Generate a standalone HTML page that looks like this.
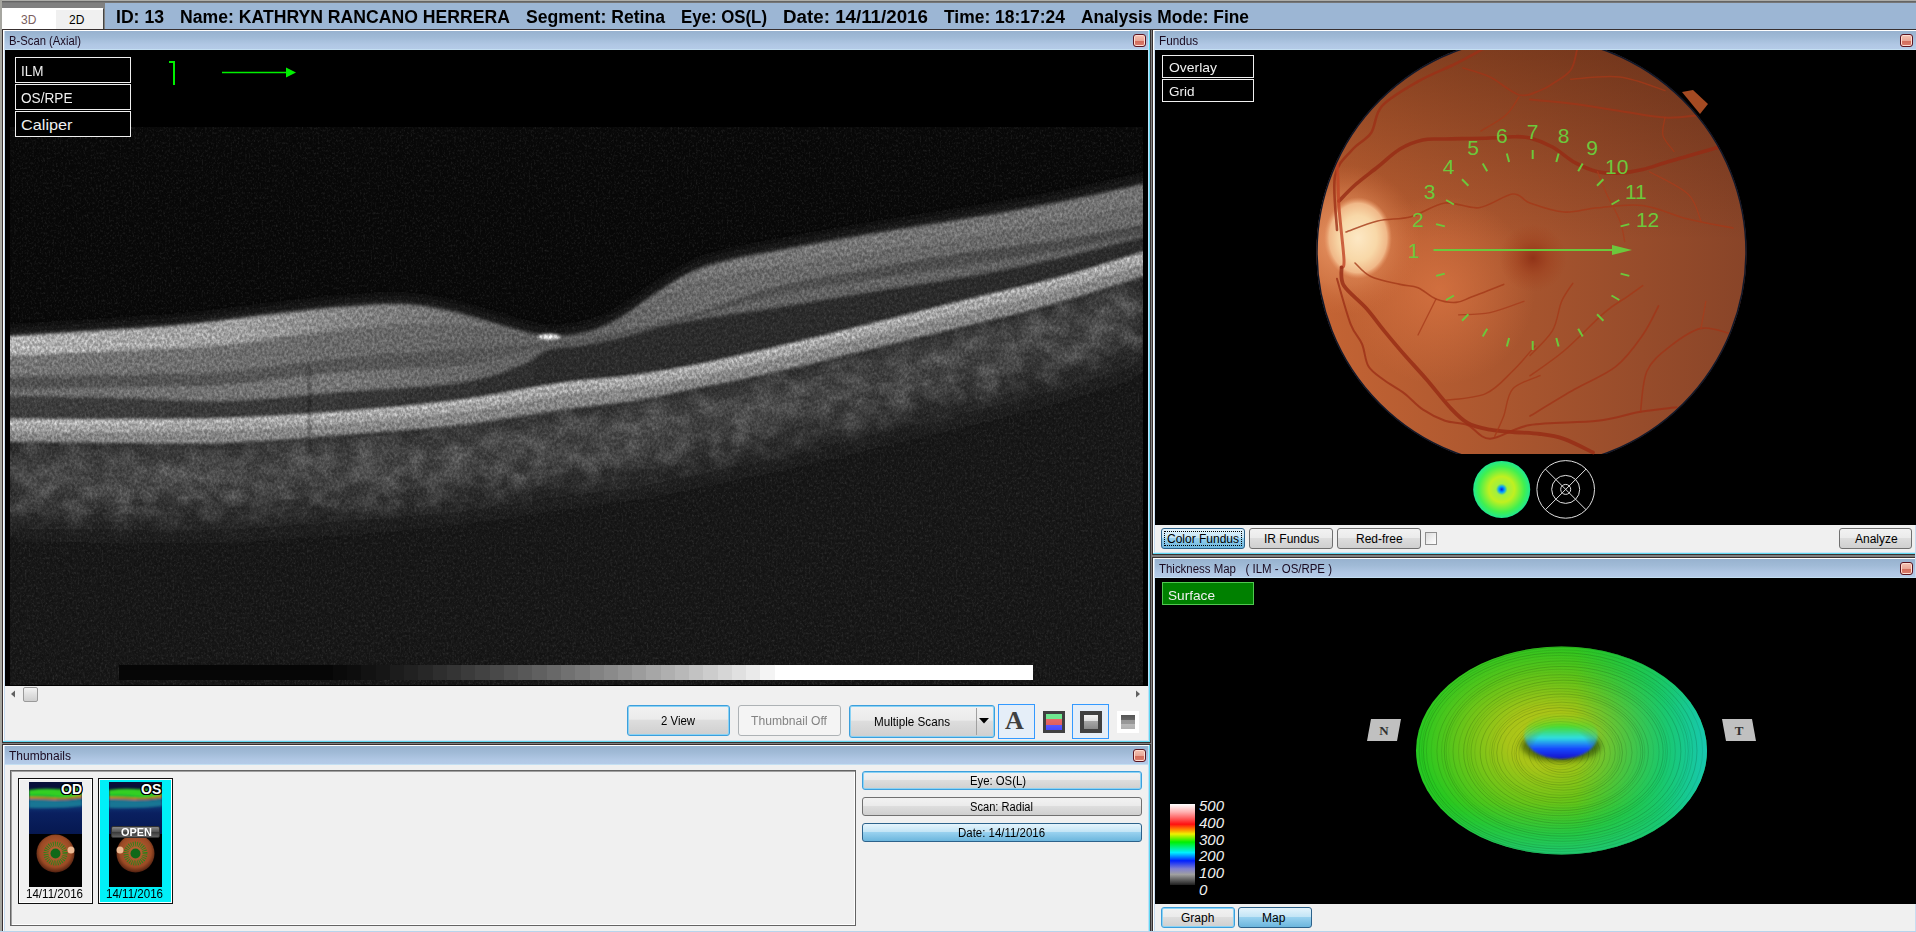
<!DOCTYPE html><html><head><meta charset="utf-8"><style>
*{box-sizing:border-box}
html,body{margin:0;padding:0;width:1916px;height:932px;overflow:hidden;background:#808080;font-family:"Liberation Sans",sans-serif}
.a{position:absolute}
.t{position:absolute;white-space:pre;transform-origin:0 0;line-height:1}
.tb{position:absolute;background:linear-gradient(#97b2cf,#a0bad6 35%,#b0c7e4 75%,#b5cbe8)}
.close{position:absolute;width:13px;height:13px;border:1px solid #5a1420;border-radius:3px;background:linear-gradient(#f6c4b4,#eaa898 50%,#d26c5a 51%,#da7c6c);box-shadow:inset 0 0 0 1px #ffdcd0}
.btn{position:absolute;border:1px solid #707070;border-radius:3px;background:linear-gradient(#f2f2f2,#ebebeb 45%,#dddddd 50%,#cfcfcf)}
.hot{border-color:#3c9fdc;box-shadow:inset 0 0 0 1px #8ad2f4}
.sel{border-color:#2c628b;background:linear-gradient(#e5f4fc,#c4e5f6 45%,#98d1ef 50%,#6cb6dd)}
.dis{border-color:#adb2b5;background:#f4f4f4}
.ob{position:absolute;border:1.5px solid #f0f0f0;background:#000}
</style></head><body>
<div class="a" style="left:0px;top:0px;width:1916px;height:1px;background:#acaca8"></div>
<div class="a" style="left:2px;top:1px;width:1914px;height:1px;background:#646464"></div>
<div class="a" style="left:2px;top:2px;width:1914px;height:1px;background:#767676"></div>
<div class="a" style="left:0px;top:0px;width:2px;height:932px;background:#a6a6a0"></div>
<div class="a" style="left:2px;top:3px;width:103px;height:5px;background:#808080"></div>
<div class="a" style="left:2px;top:8px;width:101px;height:21px;background:#fff"></div>
<div class="a" style="left:56px;top:10px;width:47px;height:19px;background:#f0f0f0"></div>
<div class="a" style="left:103px;top:9px;width:1px;height:20px;background:#444"></div>
<div class="t" style="left:21px;top:14px;font-size:12px;color:#7a6060">3D</div>
<div class="t" style="left:69px;top:14px;font-size:12px;color:#000">2D</div>
<div class="a" style="left:105px;top:3px;width:1811px;height:26px;background:#9cb6d4"></div>
<div class="a" style="left:2px;top:29px;width:1914px;height:1px;background:#333"></div>
<div class="a" style="left:2px;top:29px;width:1149px;height:714px;background:#f0f0f0"></div>
<div class="a" style="left:2px;top:29px;width:1149px;height:1px;background:#383030"></div>
<div class="a" style="left:2px;top:29px;width:1px;height:714px;background:#383030"></div>
<div class="a" style="left:3px;top:30px;width:1148px;height:1px;background:#fff"></div>
<div class="a" style="left:3px;top:30px;width:1px;height:713px;background:#fff"></div>
<div class="a" style="left:4px;top:31px;width:1px;height:712px;background:#c8dcf0"></div>
<div class="a" style="left:1150px;top:29px;width:1px;height:714px;background:#383030"></div>
<div class="a" style="left:1149px;top:30px;width:1px;height:713px;background:#60d8f0"></div>
<div class="a" style="left:1148px;top:31px;width:1px;height:711px;background:#c0e0f8"></div>
<div class="a" style="left:2px;top:742px;width:1149px;height:1px;background:#383030"></div>
<div class="a" style="left:3px;top:741px;width:1147px;height:1px;background:#60d8f0"></div>
<div class="a" style="left:4px;top:740px;width:1145px;height:1px;background:#d0e4f4"></div>
<div class="tb" style="left:5px;top:31px;width:1143px;height:18px"></div>
<div class="a" style="left:5px;top:49px;width:1143px;height:1px;background:#c4dff2"></div>
<div class="a" style="left:2px;top:744px;width:1149px;height:197px;background:#f0f0f0"></div>
<div class="a" style="left:2px;top:744px;width:1149px;height:1px;background:#383030"></div>
<div class="a" style="left:2px;top:744px;width:1px;height:197px;background:#383030"></div>
<div class="a" style="left:3px;top:745px;width:1148px;height:1px;background:#fff"></div>
<div class="a" style="left:3px;top:745px;width:1px;height:196px;background:#fff"></div>
<div class="a" style="left:4px;top:746px;width:1px;height:195px;background:#c8dcf0"></div>
<div class="a" style="left:1150px;top:744px;width:1px;height:197px;background:#383030"></div>
<div class="a" style="left:1149px;top:745px;width:1px;height:196px;background:#60d8f0"></div>
<div class="a" style="left:1148px;top:746px;width:1px;height:194px;background:#c0e0f8"></div>
<div class="tb" style="left:5px;top:746px;width:1143px;height:18px"></div>
<div class="a" style="left:5px;top:764px;width:1143px;height:1px;background:#c4dff2"></div>
<div class="a" style="left:1152px;top:29px;width:769px;height:526px;background:#f0f0f0"></div>
<div class="a" style="left:1152px;top:29px;width:769px;height:1px;background:#383030"></div>
<div class="a" style="left:1152px;top:29px;width:1px;height:526px;background:#383030"></div>
<div class="a" style="left:1153px;top:30px;width:768px;height:1px;background:#fff"></div>
<div class="a" style="left:1153px;top:30px;width:1px;height:525px;background:#fff"></div>
<div class="a" style="left:1154px;top:31px;width:1px;height:524px;background:#c8dcf0"></div>
<div class="a" style="left:1920px;top:29px;width:1px;height:526px;background:#383030"></div>
<div class="a" style="left:1919px;top:30px;width:1px;height:525px;background:#60d8f0"></div>
<div class="a" style="left:1918px;top:31px;width:1px;height:523px;background:#c0e0f8"></div>
<div class="a" style="left:1152px;top:554px;width:769px;height:1px;background:#383030"></div>
<div class="a" style="left:1153px;top:553px;width:767px;height:1px;background:#60d8f0"></div>
<div class="a" style="left:1154px;top:552px;width:765px;height:1px;background:#d0e4f4"></div>
<div class="tb" style="left:1155px;top:31px;width:761px;height:18px"></div>
<div class="a" style="left:1155px;top:49px;width:761px;height:1px;background:#c4dff2"></div>
<div class="a" style="left:1152px;top:557px;width:769px;height:384px;background:#f0f0f0"></div>
<div class="a" style="left:1152px;top:557px;width:769px;height:1px;background:#383030"></div>
<div class="a" style="left:1152px;top:557px;width:1px;height:384px;background:#383030"></div>
<div class="a" style="left:1153px;top:558px;width:768px;height:1px;background:#fff"></div>
<div class="a" style="left:1153px;top:558px;width:1px;height:383px;background:#fff"></div>
<div class="a" style="left:1154px;top:559px;width:1px;height:382px;background:#c8dcf0"></div>
<div class="a" style="left:1920px;top:557px;width:1px;height:384px;background:#383030"></div>
<div class="a" style="left:1919px;top:558px;width:1px;height:383px;background:#60d8f0"></div>
<div class="a" style="left:1918px;top:559px;width:1px;height:381px;background:#c0e0f8"></div>
<div class="tb" style="left:1155px;top:559px;width:761px;height:18px"></div>
<div class="a" style="left:1155px;top:577px;width:761px;height:1px;background:#c4dff2"></div>
<div class="a" style="left:1915px;top:50px;width:1px;height:881px;background:#c8dcf0"></div>
<div class="a" style="left:0px;top:931px;width:1916px;height:1px;background:#b8d4ec"></div>
<div class="t" id="f0" style="left:9px;top:35px;font-size:12px;color:#1a0a20;transform:scaleX(0.9389)">B-Scan (Axial)</div>
<div class="t" id="f1" style="left:1159px;top:35px;font-size:12px;color:#1a0a20;transform:scaleX(0.9742)">Fundus</div>
<div class="t" id="f2" style="left:9px;top:750px;font-size:12px;color:#1a0a20;transform:scaleX(0.9995)">Thumbnails</div>
<div class="t" id="f3" style="left:1159px;top:563px;font-size:12px;color:#1a0a20;transform:scaleX(0.9538)">Thickness Map   ( ILM - OS/RPE )</div>
<div class="close" style="left:1133px;top:34px"></div>
<div class="close" style="left:1900px;top:34px"></div>
<div class="close" style="left:1133px;top:749px"></div>
<div class="close" style="left:1900px;top:562px"></div>
<div class="a" style="left:5px;top:50px;width:1143px;height:636px;background:#000"></div>
<div class="a" style="left:1155px;top:50px;width:1760px;height:475px;background:#000"></div>
<div class="a" style="left:1155px;top:578px;width:1760px;height:326px;background:#000"></div>
<div class="t" id="f4" style="left:116px;top:8px;font-size:18px;font-weight:bold;color:#000;transform:scaleX(0.9790)">ID: 13</div>
<div class="t" id="f5" style="left:180px;top:8px;font-size:18px;font-weight:bold;color:#000;transform:scaleX(0.9791)">Name: KATHRYN RANCANO HERRERA</div>
<div class="t" id="f6" style="left:526px;top:8px;font-size:18px;font-weight:bold;color:#000;transform:scaleX(0.9787)">Segment: Retina</div>
<div class="t" id="f7" style="left:681px;top:8px;font-size:18px;font-weight:bold;color:#000;transform:scaleX(0.9346)">Eye: OS(L)</div>
<div class="t" id="f8" style="left:783px;top:8px;font-size:18px;font-weight:bold;color:#000;transform:scaleX(1.0423)">Date: 14/11/2016</div>
<div class="t" id="f9" style="left:944px;top:8px;font-size:18px;font-weight:bold;color:#000;transform:scaleX(0.9701)">Time: 18:17:24</div>
<div class="t" id="f10" style="left:1081px;top:8px;font-size:18px;font-weight:bold;color:#000;transform:scaleX(0.9653)">Analysis Mode: Fine</div>
<svg class="a" style="left:10px;top:127px" width="1133" height="558" viewBox="10 127 1133 558"><defs><filter id="ob" x="-5%" y="-5%" width="110%" height="110%"><feGaussianBlur stdDeviation="1.6"/></filter><filter id="ob3" x="-5%" y="-50%" width="110%" height="200%"><feGaussianBlur stdDeviation="4"/></filter><filter id="vn" x="0" y="0" width="100%" height="100%" color-interpolation-filters="sRGB"><feTurbulence type="fractalNoise" baseFrequency="0.55 0.4" numOctaves="2" seed="11" result="n"/><feColorMatrix in="n" type="matrix" values="0 0 0 0 1  0 0 0 0 1  0 0 0 0 1  2.5 0 0 0 -1.2"/></filter><filter id="ob2" x="-10%" y="-30%" width="120%" height="160%"><feGaussianBlur stdDeviation="16"/></filter><filter id="spk" x="0" y="0" width="100%" height="100%" color-interpolation-filters="sRGB"><feTurbulence type="fractalNoise" baseFrequency="0.4 0.3" numOctaves="2" seed="7" result="n"/><feColorMatrix in="n" type="matrix" values="0 0 0 0 0  0 0 0 0 0  0 0 0 0 0  1.4 0 0 0 -0.45" result="na"/><feComposite in="SourceGraphic" in2="na" operator="in" result="sp"/><feComposite in="sp" in2="SourceGraphic" operator="arithmetic" k1="0" k2="0.62" k3="0.83" k4="0"/></filter><filter id="mot" x="-5%" y="-40%" width="110%" height="180%" color-interpolation-filters="sRGB"><feTurbulence type="fractalNoise" baseFrequency="0.045 0.06" numOctaves="2" seed="3" result="n"/><feColorMatrix in="n" type="matrix" values="0 0 0 0 0  0 0 0 0 0  0 0 0 0 0  2.2 0 0 0 -0.75" result="na"/><feGaussianBlur in="SourceGraphic" stdDeviation="12" result="bl"/><feComposite in="bl" in2="na" operator="in"/></filter><linearGradient id="rnfl" gradientUnits="userSpaceOnUse" x1="10" y1="0" x2="1143" y2="0"><stop offset="0" stop-color="#b4b4b4"/><stop offset="0.2" stop-color="#a0a0a0"/><stop offset="0.3" stop-color="#848484"/><stop offset="0.38" stop-color="#727272"/><stop offset="0.5" stop-color="#5e5e5e"/><stop offset="0.62" stop-color="#747474"/><stop offset="1" stop-color="#727272"/></linearGradient><linearGradient id="gcl" gradientUnits="userSpaceOnUse" x1="10" y1="0" x2="1143" y2="0"><stop offset="0" stop-color="#747474"/><stop offset="0.3" stop-color="#6a6a6a"/><stop offset="0.45" stop-color="#626262"/><stop offset="0.62" stop-color="#6a6a6a"/><stop offset="1" stop-color="#686868"/></linearGradient><linearGradient id="inl" gradientUnits="userSpaceOnUse" x1="10" y1="0" x2="1143" y2="0"><stop offset="0" stop-color="#505050"/><stop offset="0.45" stop-color="#585858"/><stop offset="0.65" stop-color="#505050"/><stop offset="1" stop-color="#4a4a4a"/></linearGradient><linearGradient id="opl" gradientUnits="userSpaceOnUse" x1="10" y1="0" x2="1143" y2="0"><stop offset="0" stop-color="#6c6c6c"/><stop offset="0.3" stop-color="#747474"/><stop offset="0.45" stop-color="#606060"/><stop offset="0.7" stop-color="#626262"/><stop offset="1" stop-color="#606060"/></linearGradient><linearGradient id="onl" gradientUnits="userSpaceOnUse" x1="10" y1="0" x2="1143" y2="0"><stop offset="0" stop-color="#3c3c3c"/><stop offset="0.3" stop-color="#363636"/><stop offset="0.5" stop-color="#2a2a2a"/><stop offset="1" stop-color="#2c2c2c"/></linearGradient></defs><g filter="url(#spk)"><rect x="10" y="127" width="1133" height="558" fill="#080808"/><g filter="url(#ob2)"><path d="M0,436.90909090909093 C1.7,436.9 -10.0,436.8 10.0,437.0 C30.0,437.2 84.2,437.8 120.0,438.0 C155.8,438.2 188.3,439.3 225.0,438.0 C261.7,436.7 301.2,433.0 340.0,430.0 C378.8,427.0 421.3,424.2 458.0,420.0 C494.7,415.8 531.2,409.0 560.0,405.0 C588.8,401.0 607.3,399.8 631.0,396.0 C654.7,392.2 677.2,387.0 702.0,382.0 C726.8,377.0 752.0,372.3 780.0,366.0 C808.0,359.7 838.3,351.7 870.0,344.0 C901.7,336.3 938.3,327.8 970.0,320.0 C1001.7,312.2 1031.2,305.2 1060.0,297.0 C1088.8,288.8 1127.5,275.9 1143.0,271.0 C1158.5,266.1 1151.3,268.4 1153.0,267.9 L1170,720 C971.7,720.0 178.3,720.0 -20.0,720.0 Z" fill="#121212" /><path d="M0,436.90909090909093 C1.7,436.9 -10.0,436.8 10.0,437.0 C30.0,437.2 84.2,437.8 120.0,438.0 C155.8,438.2 188.3,439.3 225.0,438.0 C261.7,436.7 301.2,433.0 340.0,430.0 C378.8,427.0 421.3,424.2 458.0,420.0 C494.7,415.8 531.2,409.0 560.0,405.0 C588.8,401.0 607.3,399.8 631.0,396.0 C654.7,392.2 677.2,387.0 702.0,382.0 C726.8,377.0 752.0,372.3 780.0,366.0 C808.0,359.7 838.3,351.7 870.0,344.0 C901.7,336.3 938.3,327.8 970.0,320.0 C1001.7,312.2 1031.2,305.2 1060.0,297.0 C1088.8,288.8 1127.5,275.9 1143.0,271.0 C1158.5,266.1 1151.3,268.4 1153.0,267.9 L1153,357.86746987951807 C1151.3,358.4 1158.5,356.1 1143.0,361.0 C1127.5,365.9 1088.8,378.8 1060.0,387.0 C1031.2,395.2 1001.7,402.2 970.0,410.0 C938.3,417.8 901.7,426.3 870.0,434.0 C838.3,441.7 808.0,449.7 780.0,456.0 C752.0,462.3 726.8,467.0 702.0,472.0 C677.2,477.0 654.7,482.2 631.0,486.0 C607.3,489.8 588.8,491.0 560.0,495.0 C531.2,499.0 494.7,505.8 458.0,510.0 C421.3,514.2 378.8,517.0 340.0,520.0 C301.2,523.0 261.7,526.7 225.0,528.0 C188.3,529.3 155.8,528.2 120.0,528.0 C84.2,527.8 30.0,527.2 10.0,527.0 C-10.0,526.8 1.7,526.9 0.0,526.9 Z" fill="#272727" /><path d="M0,436.90909090909093 C1.7,436.9 -10.0,436.8 10.0,437.0 C30.0,437.2 84.2,437.8 120.0,438.0 C155.8,438.2 188.3,439.3 225.0,438.0 C261.7,436.7 301.2,433.0 340.0,430.0 C378.8,427.0 421.3,424.2 458.0,420.0 C494.7,415.8 531.2,409.0 560.0,405.0 C588.8,401.0 607.3,399.8 631.0,396.0 C654.7,392.2 677.2,387.0 702.0,382.0 C726.8,377.0 752.0,372.3 780.0,366.0 C808.0,359.7 838.3,351.7 870.0,344.0 C901.7,336.3 938.3,327.8 970.0,320.0 C1001.7,312.2 1031.2,305.2 1060.0,297.0 C1088.8,288.8 1127.5,275.9 1143.0,271.0 C1158.5,266.1 1151.3,268.4 1153.0,267.9 L1153,327.86746987951807 C1151.3,328.4 1158.5,326.1 1143.0,331.0 C1127.5,335.9 1088.8,348.8 1060.0,357.0 C1031.2,365.2 1001.7,372.2 970.0,380.0 C938.3,387.8 901.7,396.3 870.0,404.0 C838.3,411.7 808.0,419.7 780.0,426.0 C752.0,432.3 726.8,437.0 702.0,442.0 C677.2,447.0 654.7,452.2 631.0,456.0 C607.3,459.8 588.8,461.0 560.0,465.0 C531.2,469.0 494.7,475.8 458.0,480.0 C421.3,484.2 378.8,487.0 340.0,490.0 C301.2,493.0 261.7,496.7 225.0,498.0 C188.3,499.3 155.8,498.2 120.0,498.0 C84.2,497.8 30.0,497.2 10.0,497.0 C-10.0,496.8 1.7,496.9 0.0,496.9 Z" fill="#3e3e3e" /></g><g filter="url(#mot)"><path d="M0,444.90909090909093 C1.7,444.9 -10.0,444.8 10.0,445.0 C30.0,445.2 84.2,445.8 120.0,446.0 C155.8,446.2 188.3,447.3 225.0,446.0 C261.7,444.7 301.2,441.0 340.0,438.0 C378.8,435.0 421.3,432.2 458.0,428.0 C494.7,423.8 531.2,417.0 560.0,413.0 C588.8,409.0 607.3,407.8 631.0,404.0 C654.7,400.2 677.2,395.0 702.0,390.0 C726.8,385.0 752.0,380.3 780.0,374.0 C808.0,367.7 838.3,359.7 870.0,352.0 C901.7,344.3 938.3,335.8 970.0,328.0 C1001.7,320.2 1031.2,313.2 1060.0,305.0 C1088.8,296.8 1127.5,283.9 1143.0,279.0 C1158.5,274.1 1151.3,276.4 1153.0,275.9 L1153,347.86746987951807 C1151.3,348.4 1158.5,346.1 1143.0,351.0 C1127.5,355.9 1088.8,368.8 1060.0,377.0 C1031.2,385.2 1001.7,392.2 970.0,400.0 C938.3,407.8 901.7,416.3 870.0,424.0 C838.3,431.7 808.0,439.7 780.0,446.0 C752.0,452.3 726.8,457.0 702.0,462.0 C677.2,467.0 654.7,472.2 631.0,476.0 C607.3,479.8 588.8,481.0 560.0,485.0 C531.2,489.0 494.7,495.8 458.0,500.0 C421.3,504.2 378.8,507.0 340.0,510.0 C301.2,513.0 261.7,516.7 225.0,518.0 C188.3,519.3 155.8,518.2 120.0,518.0 C84.2,517.8 30.0,517.2 10.0,517.0 C-10.0,516.8 1.7,516.9 0.0,516.9 Z" fill="#5a5a5a" /></g><g filter="url(#ob3)"><path d="M0,328.6111111111111 C1.7,328.5 -6.7,329.0 10.0,328.0 C26.7,327.0 71.7,324.3 100.0,322.5 C128.3,320.7 153.3,319.5 180.0,317.0 C206.7,314.5 233.3,310.5 260.0,307.5 C286.7,304.5 316.7,300.9 340.0,299.0 C363.3,297.1 382.3,295.5 400.0,296.0 C417.7,296.5 432.3,299.4 446.0,302.0 C459.7,304.6 470.2,308.2 482.0,311.5 C493.8,314.8 506.8,318.8 517.0,321.5 C527.2,324.2 535.5,326.4 543.0,327.5 C550.5,328.6 553.3,329.0 562.0,328.0 C570.7,327.0 584.7,325.0 595.0,321.5 C605.3,318.0 614.2,312.9 624.0,307.0 C633.8,301.1 643.0,293.1 654.0,286.0 C665.0,278.9 678.2,270.0 690.0,264.5 C701.8,259.0 710.0,256.8 725.0,253.0 C740.0,249.2 755.8,246.5 780.0,242.0 C804.2,237.5 838.3,231.3 870.0,226.0 C901.7,220.7 938.3,215.3 970.0,210.0 C1001.7,204.7 1031.2,199.7 1060.0,194.0 C1088.8,188.3 1127.5,179.4 1143.0,176.0 C1158.5,172.6 1151.3,174.2 1153.0,173.8 L1153,186.83132530120483 C1151.3,187.2 1158.5,185.6 1143.0,189.0 C1127.5,192.4 1088.8,201.3 1060.0,207.0 C1031.2,212.7 1001.7,217.7 970.0,223.0 C938.3,228.3 901.7,233.7 870.0,239.0 C838.3,244.3 804.2,250.5 780.0,255.0 C755.8,259.5 740.0,262.2 725.0,266.0 C710.0,269.8 701.8,272.0 690.0,277.5 C678.2,283.0 665.0,291.9 654.0,299.0 C643.0,306.1 633.8,314.1 624.0,320.0 C614.2,325.9 605.3,331.0 595.0,334.5 C584.7,338.0 570.7,340.0 562.0,341.0 C553.3,342.0 550.5,341.6 543.0,340.5 C535.5,339.4 527.2,337.2 517.0,334.5 C506.8,331.8 493.8,327.8 482.0,324.5 C470.2,321.2 459.7,317.6 446.0,315.0 C432.3,312.4 417.7,309.5 400.0,309.0 C382.3,308.5 363.3,310.1 340.0,312.0 C316.7,313.9 286.7,317.5 260.0,320.5 C233.3,323.5 206.7,327.5 180.0,330.0 C153.3,332.5 128.3,333.7 100.0,335.5 C71.7,337.3 26.7,340.0 10.0,341.0 C-6.7,342.0 1.7,341.5 0.0,341.6 Z" fill="#1e1e1e" /></g><g filter="url(#ob)"><path d="M0,336.6111111111111 C1.7,336.5 -6.7,337.0 10.0,336.0 C26.7,335.0 71.7,332.3 100.0,330.5 C128.3,328.7 153.3,327.5 180.0,325.0 C206.7,322.5 233.3,318.5 260.0,315.5 C286.7,312.5 316.7,308.9 340.0,307.0 C363.3,305.1 382.3,303.5 400.0,304.0 C417.7,304.5 432.3,307.4 446.0,310.0 C459.7,312.6 470.2,316.2 482.0,319.5 C493.8,322.8 506.8,326.8 517.0,329.5 C527.2,332.2 535.5,334.4 543.0,335.5 C550.5,336.6 553.3,337.0 562.0,336.0 C570.7,335.0 584.7,333.0 595.0,329.5 C605.3,326.0 614.2,320.9 624.0,315.0 C633.8,309.1 643.0,301.1 654.0,294.0 C665.0,286.9 678.2,278.0 690.0,272.5 C701.8,267.0 710.0,264.8 725.0,261.0 C740.0,257.2 755.8,254.5 780.0,250.0 C804.2,245.5 838.3,239.3 870.0,234.0 C901.7,228.7 938.3,223.3 970.0,218.0 C1001.7,212.7 1031.2,207.7 1060.0,202.0 C1088.8,196.3 1127.5,187.4 1143.0,184.0 C1158.5,180.6 1151.3,182.2 1153.0,181.8 L1153,202.95180722891567 C1151.3,203.3 1158.5,201.8 1143.0,205.0 C1127.5,208.2 1088.8,216.5 1060.0,222.0 C1031.2,227.5 1001.7,232.8 970.0,238.0 C938.3,243.2 901.7,248.2 870.0,253.0 C838.3,257.8 804.2,263.2 780.0,267.0 C755.8,270.8 740.0,272.8 725.0,276.0 C710.0,279.2 701.8,281.2 690.0,286.0 C678.2,290.8 665.0,298.7 654.0,305.0 C643.0,311.3 636.3,318.3 624.0,324.0 C611.7,329.7 592.7,336.3 580.0,339.0 C567.3,341.7 558.0,340.5 548.0,340.0 C538.0,339.5 531.0,337.8 520.0,336.0 C509.0,334.2 498.7,330.8 482.0,329.0 C465.3,327.2 443.7,324.8 420.0,325.0 C396.3,325.2 372.5,326.7 340.0,330.0 C307.5,333.3 261.7,341.5 225.0,345.0 C188.3,348.5 155.8,349.2 120.0,351.0 C84.2,352.8 30.0,355.1 10.0,356.0 C-10.0,356.9 1.7,356.4 0.0,356.5 Z" fill="url(#rnfl)" /><path d="M0,356.45454545454544 C1.7,356.4 -10.0,356.9 10.0,356.0 C30.0,355.1 84.2,352.8 120.0,351.0 C155.8,349.2 188.3,348.5 225.0,345.0 C261.7,341.5 307.5,333.3 340.0,330.0 C372.5,326.7 396.3,325.2 420.0,325.0 C443.7,324.8 465.3,327.2 482.0,329.0 C498.7,330.8 509.0,334.2 520.0,336.0 C531.0,337.8 538.0,339.5 548.0,340.0 C558.0,340.5 567.3,341.7 580.0,339.0 C592.7,336.3 611.7,329.7 624.0,324.0 C636.3,318.3 643.0,311.3 654.0,305.0 C665.0,298.7 678.2,290.8 690.0,286.0 C701.8,281.2 710.0,279.2 725.0,276.0 C740.0,272.8 755.8,270.8 780.0,267.0 C804.2,263.2 838.3,257.8 870.0,253.0 C901.7,248.2 938.3,243.2 970.0,238.0 C1001.7,232.8 1031.2,227.5 1060.0,222.0 C1088.8,216.5 1127.5,208.2 1143.0,205.0 C1158.5,201.8 1151.3,203.3 1153.0,203.0 L1153,223.19277108433735 C1151.3,223.5 1158.5,222.2 1143.0,225.0 C1127.5,227.8 1088.8,235.5 1060.0,240.0 C1031.2,244.5 1001.7,247.2 970.0,252.0 C938.3,256.8 901.7,263.3 870.0,269.0 C838.3,274.7 812.0,277.8 780.0,286.0 C748.0,294.2 704.0,311.0 678.0,318.5 C652.0,326.0 640.3,327.2 624.0,331.0 C607.7,334.8 592.7,339.0 580.0,341.0 C567.3,343.0 558.0,342.2 548.0,343.0 C538.0,343.8 535.0,344.8 520.0,346.0 C505.0,347.2 488.0,347.8 458.0,350.0 C428.0,352.2 378.8,355.2 340.0,359.0 C301.2,362.8 261.7,369.8 225.0,372.5 C188.3,375.2 155.8,374.2 120.0,375.0 C84.2,375.8 30.0,376.6 10.0,377.0 C-10.0,377.4 1.7,377.2 0.0,377.2 Z" fill="url(#gcl)" /><path d="M0,377.1818181818182 C1.7,377.2 -10.0,377.4 10.0,377.0 C30.0,376.6 84.2,375.8 120.0,375.0 C155.8,374.2 188.3,375.2 225.0,372.5 C261.7,369.8 301.2,362.8 340.0,359.0 C378.8,355.2 428.0,352.2 458.0,350.0 C488.0,347.8 505.0,347.2 520.0,346.0 C535.0,344.8 538.0,343.8 548.0,343.0 C558.0,342.2 567.3,343.0 580.0,341.0 C592.7,339.0 607.7,334.8 624.0,331.0 C640.3,327.2 652.0,326.0 678.0,318.5 C704.0,311.0 748.0,294.2 780.0,286.0 C812.0,277.8 838.3,274.7 870.0,269.0 C901.7,263.3 938.3,256.8 970.0,252.0 C1001.7,247.2 1031.2,244.5 1060.0,240.0 C1088.8,235.5 1127.5,227.8 1143.0,225.0 C1158.5,222.2 1151.3,223.5 1153.0,223.2 L1153,230.95180722891567 C1151.3,231.3 1158.5,229.8 1143.0,233.0 C1127.5,236.2 1088.8,244.8 1060.0,250.0 C1031.2,255.2 1001.7,259.2 970.0,264.0 C938.3,268.8 901.7,274.0 870.0,279.0 C838.3,284.0 812.0,287.0 780.0,294.0 C748.0,301.0 704.0,314.3 678.0,321.0 C652.0,327.7 640.3,330.3 624.0,334.0 C607.7,337.7 592.7,341.0 580.0,343.0 C567.3,345.0 558.0,344.5 548.0,346.0 C538.0,347.5 535.0,348.8 520.0,352.0 C505.0,355.2 488.0,361.7 458.0,365.0 C428.0,368.3 378.8,368.8 340.0,372.0 C301.2,375.2 261.7,381.5 225.0,384.0 C188.3,386.5 155.8,386.2 120.0,387.0 C84.2,387.8 30.0,388.6 10.0,389.0 C-10.0,389.4 1.7,389.2 0.0,389.2 Z" fill="url(#inl)" /><path d="M0,389.1818181818182 C1.7,389.2 -10.0,389.4 10.0,389.0 C30.0,388.6 84.2,387.8 120.0,387.0 C155.8,386.2 188.3,386.5 225.0,384.0 C261.7,381.5 301.2,375.2 340.0,372.0 C378.8,368.8 428.0,368.3 458.0,365.0 C488.0,361.7 505.0,355.2 520.0,352.0 C535.0,348.8 538.0,347.5 548.0,346.0 C558.0,344.5 567.3,345.0 580.0,343.0 C592.7,341.0 607.7,337.7 624.0,334.0 C640.3,330.3 652.0,327.7 678.0,321.0 C704.0,314.3 748.0,301.0 780.0,294.0 C812.0,287.0 838.3,284.0 870.0,279.0 C901.7,274.0 938.3,268.8 970.0,264.0 C1001.7,259.2 1031.2,255.2 1060.0,250.0 C1088.8,244.8 1127.5,236.2 1143.0,233.0 C1158.5,229.8 1151.3,231.3 1153.0,231.0 L1153,234.46987951807228 C1151.3,234.9 1158.5,233.1 1143.0,237.0 C1127.5,240.9 1088.8,251.5 1060.0,258.0 C1031.2,264.5 1001.7,270.3 970.0,276.0 C938.3,281.7 901.7,286.8 870.0,292.0 C838.3,297.2 812.0,301.8 780.0,307.0 C748.0,312.2 704.0,318.0 678.0,323.0 C652.0,328.0 640.3,333.2 624.0,337.0 C607.7,340.8 592.7,343.8 580.0,346.0 C567.3,348.2 558.0,346.7 548.0,350.0 C538.0,353.3 535.0,360.5 520.0,366.0 C505.0,371.5 488.0,378.7 458.0,383.0 C428.0,387.3 378.8,389.0 340.0,392.0 C301.2,395.0 261.7,400.0 225.0,401.0 C188.3,402.0 155.8,398.8 120.0,398.0 C84.2,397.2 30.0,396.4 10.0,396.0 C-10.0,395.6 1.7,395.8 0.0,395.8 Z" fill="url(#opl)" /><path d="M0,395.8181818181818 C1.7,395.8 -10.0,395.6 10.0,396.0 C30.0,396.4 84.2,397.2 120.0,398.0 C155.8,398.8 188.3,402.0 225.0,401.0 C261.7,400.0 301.2,395.0 340.0,392.0 C378.8,389.0 428.0,387.3 458.0,383.0 C488.0,378.7 505.0,371.5 520.0,366.0 C535.0,360.5 538.0,353.3 548.0,350.0 C558.0,346.7 567.3,348.2 580.0,346.0 C592.7,343.8 607.7,340.8 624.0,337.0 C640.3,333.2 652.0,328.0 678.0,323.0 C704.0,318.0 748.0,312.2 780.0,307.0 C812.0,301.8 838.3,297.2 870.0,292.0 C901.7,286.8 938.3,281.7 970.0,276.0 C1001.7,270.3 1031.2,264.5 1060.0,258.0 C1088.8,251.5 1127.5,240.9 1143.0,237.0 C1158.5,233.1 1151.3,234.9 1153.0,234.5 L1153,250.9879518072289 C1151.3,251.5 1158.5,249.3 1143.0,254.0 C1127.5,258.7 1088.8,271.2 1060.0,279.0 C1031.2,286.8 1001.7,293.2 970.0,301.0 C938.3,308.8 901.7,318.2 870.0,326.0 C838.3,333.8 808.0,341.4 780.0,348.0 C752.0,354.6 726.8,360.6 702.0,365.5 C677.2,370.4 654.7,374.2 631.0,377.5 C607.3,380.8 588.8,380.9 560.0,385.0 C531.2,389.1 494.7,397.2 458.0,402.0 C421.3,406.8 378.8,410.5 340.0,413.5 C301.2,416.5 261.7,418.8 225.0,420.0 C188.3,421.2 155.8,420.8 120.0,421.0 C84.2,421.2 30.0,421.0 10.0,421.0 C-10.0,421.0 1.7,421.0 0.0,421.0 Z" fill="url(#onl)" /><path d="M0,419.5 C1.7,419.5 -10.0,419.5 10.0,419.5 C30.0,419.5 84.2,419.7 120.0,419.5 C155.8,419.3 188.3,419.8 225.0,418.5 C261.7,417.2 301.2,415.0 340.0,412.0 C378.8,409.0 421.3,405.2 458.0,400.5 C494.7,395.8 531.2,387.6 560.0,383.5 C588.8,379.4 607.3,379.2 631.0,376.0 C654.7,372.8 677.2,368.9 702.0,364.0 C726.8,359.1 752.0,353.1 780.0,346.5 C808.0,339.9 838.3,332.3 870.0,324.5 C901.7,316.7 938.3,307.3 970.0,299.5 C1001.7,291.7 1031.2,285.3 1060.0,277.5 C1088.8,269.7 1127.5,257.2 1143.0,252.5 C1158.5,247.8 1151.3,250.0 1153.0,249.5 L1153,253.9879518072289 C1151.3,254.5 1158.5,252.3 1143.0,257.0 C1127.5,261.7 1088.8,274.2 1060.0,282.0 C1031.2,289.8 1001.7,296.2 970.0,304.0 C938.3,311.8 901.7,321.2 870.0,329.0 C838.3,336.8 808.0,344.4 780.0,351.0 C752.0,357.6 726.8,363.6 702.0,368.5 C677.2,373.4 654.7,377.2 631.0,380.5 C607.3,383.8 588.8,383.9 560.0,388.0 C531.2,392.1 494.7,400.2 458.0,405.0 C421.3,409.8 378.8,413.5 340.0,416.5 C301.2,419.5 261.7,421.8 225.0,423.0 C188.3,424.2 155.8,423.8 120.0,424.0 C84.2,424.2 30.0,424.0 10.0,424.0 C-10.0,424.0 1.7,424.0 0.0,424.0 Z" fill="#bcbcbc" /><path d="M0,424.0 C1.7,424.0 -10.0,424.0 10.0,424.0 C30.0,424.0 84.2,424.2 120.0,424.0 C155.8,423.8 188.3,424.2 225.0,423.0 C261.7,421.8 301.2,419.5 340.0,416.5 C378.8,413.5 421.3,409.8 458.0,405.0 C494.7,400.2 531.2,392.1 560.0,388.0 C588.8,383.9 607.3,383.8 631.0,380.5 C654.7,377.2 677.2,373.4 702.0,368.5 C726.8,363.6 752.0,357.6 780.0,351.0 C808.0,344.4 838.3,336.8 870.0,329.0 C901.7,321.2 938.3,311.8 970.0,304.0 C1001.7,296.2 1031.2,289.8 1060.0,282.0 C1088.8,274.2 1127.5,261.7 1143.0,257.0 C1158.5,252.3 1151.3,254.5 1153.0,254.0 L1153,261.9879518072289 C1151.3,262.5 1158.5,260.3 1143.0,265.0 C1127.5,269.7 1088.8,282.2 1060.0,290.0 C1031.2,297.8 1001.7,304.2 970.0,312.0 C938.3,319.8 901.7,329.2 870.0,337.0 C838.3,344.8 808.0,352.4 780.0,359.0 C752.0,365.6 726.8,371.6 702.0,376.5 C677.2,381.4 654.7,385.2 631.0,388.5 C607.3,391.8 588.8,391.9 560.0,396.0 C531.2,400.1 494.7,408.2 458.0,413.0 C421.3,417.8 378.8,421.5 340.0,424.5 C301.2,427.5 261.7,429.8 225.0,431.0 C188.3,432.2 155.8,431.8 120.0,432.0 C84.2,432.2 30.0,432.0 10.0,432.0 C-10.0,432.0 1.7,432.0 0.0,432.0 Z" fill="#a4a4a4" /><path d="M0,432.0 C1.7,432.0 -10.0,432.0 10.0,432.0 C30.0,432.0 84.2,432.2 120.0,432.0 C155.8,431.8 188.3,432.2 225.0,431.0 C261.7,429.8 301.2,427.5 340.0,424.5 C378.8,421.5 421.3,417.8 458.0,413.0 C494.7,408.2 531.2,400.1 560.0,396.0 C588.8,391.9 607.3,391.8 631.0,388.5 C654.7,385.2 677.2,381.4 702.0,376.5 C726.8,371.6 752.0,365.6 780.0,359.0 C808.0,352.4 838.3,344.8 870.0,337.0 C901.7,329.2 938.3,319.8 970.0,312.0 C1001.7,304.2 1031.2,297.8 1060.0,290.0 C1088.8,282.2 1127.5,269.7 1143.0,265.0 C1158.5,260.3 1151.3,262.5 1153.0,262.0 L1153,272.86746987951807 C1151.3,273.4 1158.5,271.1 1143.0,276.0 C1127.5,280.9 1088.8,293.8 1060.0,302.0 C1031.2,310.2 1001.7,317.2 970.0,325.0 C938.3,332.8 901.7,341.3 870.0,349.0 C838.3,356.7 808.0,364.7 780.0,371.0 C752.0,377.3 726.8,382.0 702.0,387.0 C677.2,392.0 654.7,397.2 631.0,401.0 C607.3,404.8 588.8,406.0 560.0,410.0 C531.2,414.0 494.7,420.8 458.0,425.0 C421.3,429.2 378.8,432.0 340.0,435.0 C301.2,438.0 261.7,441.7 225.0,443.0 C188.3,444.3 155.8,443.2 120.0,443.0 C84.2,442.8 30.0,442.2 10.0,442.0 C-10.0,441.8 1.7,441.9 0.0,441.9 Z" fill="#868686" /><ellipse cx="549" cy="336.5" rx="11" ry="2.5" fill="#f4f4f4"/><rect x="308" y="365" width="3" height="90" fill="#000" opacity="0.35"/></g></g><rect x="10" y="127" width="1133" height="558" fill="#fff" filter="url(#vn)" opacity="0.09"/></svg>
<div class="ob" style="left:15px;top:57px;width:116px;height:26px"></div>
<div class="t" id="f11" style="left:21px;top:63px;font-size:15px;color:#f0f0f0;transform:scaleX(0.8994)">ILM</div>
<div class="ob" style="left:15px;top:84px;width:116px;height:26px"></div>
<div class="t" id="f12" style="left:21px;top:90px;font-size:15px;color:#f0f0f0;transform:scaleX(0.9085)">OS/RPE</div>
<div class="ob" style="left:15px;top:111px;width:116px;height:26px"></div>
<div class="t" id="f13" style="left:21px;top:117px;font-size:15px;color:#f0f0f0;transform:scaleX(1.0835)">Caliper</div>
<svg class="a" style="left:160px;top:55px" width="150" height="40"><path d="M9,7 L14,7 L14,30" stroke="#00f000" stroke-width="2" fill="none"/><line x1="62" y1="17.5" x2="128" y2="17.5" stroke="#00f000" stroke-width="1.5"/><path d="M126,12.5 L136,17.5 L126,22.5 Z" fill="#00f000"/></svg>
<div class="a" style="left:119px;top:665px;width:914px;height:15px;background:linear-gradient(90deg,#060606 0px,#060606 214px,rgb(10,10,10) 214.0px,rgb(10,10,10) 228.2px,rgb(13,13,13) 228.2px,rgb(13,13,13) 242.5px,rgb(18,18,18) 242.5px,rgb(18,18,18) 256.8px,rgb(22,22,22) 256.8px,rgb(22,22,22) 271.0px,rgb(28,28,28) 271.0px,rgb(28,28,28) 285.2px,rgb(33,33,33) 285.2px,rgb(33,33,33) 299.5px,rgb(39,39,39) 299.5px,rgb(39,39,39) 313.8px,rgb(46,46,46) 313.8px,rgb(46,46,46) 328.0px,rgb(52,52,52) 328.0px,rgb(52,52,52) 342.2px,rgb(59,59,59) 342.2px,rgb(59,59,59) 356.5px,rgb(66,66,66) 356.5px,rgb(66,66,66) 370.8px,rgb(73,73,73) 370.8px,rgb(73,73,73) 385.0px,rgb(81,81,81) 385.0px,rgb(81,81,81) 399.2px,rgb(88,88,88) 399.2px,rgb(88,88,88) 413.5px,rgb(96,96,96) 413.5px,rgb(96,96,96) 427.8px,rgb(104,104,104) 427.8px,rgb(104,104,104) 442.0px,rgb(113,113,113) 442.0px,rgb(113,113,113) 456.2px,rgb(121,121,121) 456.2px,rgb(121,121,121) 470.5px,rgb(130,130,130) 470.5px,rgb(130,130,130) 484.8px,rgb(138,138,138) 484.8px,rgb(138,138,138) 499.0px,rgb(147,147,147) 499.0px,rgb(147,147,147) 513.2px,rgb(156,156,156) 513.2px,rgb(156,156,156) 527.5px,rgb(166,166,166) 527.5px,rgb(166,166,166) 541.8px,rgb(175,175,175) 541.8px,rgb(175,175,175) 556.0px,rgb(184,184,184) 556.0px,rgb(184,184,184) 570.2px,rgb(194,194,194) 570.2px,rgb(194,194,194) 584.5px,rgb(204,204,204) 584.5px,rgb(204,204,204) 598.8px,rgb(214,214,214) 598.8px,rgb(214,214,214) 613.0px,rgb(224,224,224) 613.0px,rgb(224,224,224) 627.2px,rgb(234,234,234) 627.2px,rgb(234,234,234) 641.5px,rgb(244,244,244) 641.5px,rgb(244,244,244) 655.8px,rgb(255,255,255) 655.8px,rgb(255,255,255) 670.0px,#fff 670px,#fff 914px)"></div>
<svg class="a" style="left:5px;top:686px" width="1143" height="16"><path d="M6,8 L10,4.5 L10,11.5 Z" fill="#606060"/><path d="M1131,4.5 L1135,8 L1131,11.5 Z" fill="#606060"/></svg>
<div class="a" style="left:23px;top:687px;width:15px;height:15px;border:1px solid #9a9a9a;border-radius:2px;background:linear-gradient(#f4f4f4,#e0e0e0 50%,#cfcfcf)"></div>
<div class="btn hot" style="left:627px;top:705px;width:103px;height:31px"></div>
<div class="t" id="f14" style="left:661px;top:715px;font-size:12px;color:#000;transform:scaleX(0.9494)">2 View</div>
<div class="btn dis" style="left:738px;top:705px;width:103px;height:31px"></div>
<div class="t" id="f15" style="left:751px;top:715px;font-size:12px;color:#838383;transform:scaleX(1.0112)">Thumbnail Off</div>
<div class="btn hot" style="left:849px;top:705px;width:146px;height:33px"></div>
<div class="t" id="f16" style="left:874px;top:716px;font-size:12px;color:#000;transform:scaleX(0.9738)">Multiple Scans</div>
<div class="a" style="left:976px;top:708px;width:1px;height:27px;background:#a0a0a0"></div>
<svg class="a" style="left:978px;top:716px" width="14" height="10"><path d="M1,2 L11,2 L6,7.5 Z" fill="#000"/></svg>
<div class="a" style="left:998px;top:704px;width:37px;height:35px;border:1px solid #3399ff;background:#e5eef8"></div>
<div class="t" style="left:1005px;top:708px;font-family:'Liberation Serif',serif;font-weight:bold;font-size:26px;color:#404040">A</div>
<div class="a" style="left:1043px;top:711px;width:22px;height:22px;border:3px solid #404040;background:linear-gradient(#70e890 0%,#70e890 33%,#e86868 34%,#e06060 66%,#5a5aff 67%,#4848ff 100%)"></div>
<div class="a" style="left:1072px;top:704px;width:37px;height:35px;border:1px solid #3399ff;background:#e5eef8"></div>
<div class="a" style="left:1080px;top:711px;width:22px;height:22px;border:4px solid #404040;background:linear-gradient(#f4f4f4,#e0e0e0 40%,#a8a8a8 41%,#888 100%)"></div>
<div class="a" style="left:1117px;top:711px;width:22px;height:22px;background:#fff"></div>
<div class="a" style="left:1121px;top:715px;width:14px;height:14px;background:linear-gradient(#555 0%,#666 33%,#959595 34%,#999 66%,#b8b8b8 67%,#b0b0b0 100%)"></div>
<div class="a" style="left:10px;top:770px;width:846px;height:156px;border:1px solid #646464;box-shadow:inset 1px 1px 0 #a0a0a0, inset -1px -1px 0 #fff;background:#f0f0f0"></div>
<div class="a" style="left:18px;top:778px;width:75px;height:126px;border:1px solid #101010;box-shadow:inset 0 0 0 1px #fff;background:#f0f0f0"></div>
<svg class="a" style="left:29px;top:782px" width="53" height="105"><defs><linearGradient id="tgOD" x1="0" y1="0" x2="0" y2="1"><stop offset="0" stop-color="#08103a"/><stop offset="0.2" stop-color="#08103a"/><stop offset="0.42" stop-color="#103878"/><stop offset="0.6" stop-color="#0a2060"/><stop offset="1" stop-color="#061850"/></linearGradient><radialGradient id="tfOD" cx="0.5" cy="0.45" r="0.55"><stop offset="0" stop-color="#c06838"/><stop offset="0.75" stop-color="#9a4a24"/><stop offset="1" stop-color="#502010"/></radialGradient><filter id="tblOD"><feGaussianBlur stdDeviation="0.8"/></filter></defs><rect width="53" height="52" fill="url(#tgOD)"/><g filter="url(#tblOD)"><path d="M0,8 Q14,6 26,7 T53,5 L53,15 Q40,18 26,17 T0,17 Z" fill="#30d020"/><path d="M0,13 Q14,12 26,14 T53,13 L53,16 Q40,18 26,17 T0,16 Z" fill="#10a040" opacity="0.7"/><path d="M0,15 Q14,15 26,16 T53,13 L53,16 Q40,18 26,18 T0,17 Z" fill="#f07010" opacity="0.85"/><path d="M0,17 Q14,17 26,18 T53,16 L53,24 Q30,27 0,26 Z" fill="#1890a0" opacity="0.7"/></g><rect y="52" width="53" height="53" fill="#000"/><circle cx="26.5" cy="71.5" r="19" fill="url(#tfOD)"/><circle cx="42" cy="68" r="3.5" fill="#f8c8a0" opacity="0.9"/><circle cx="26.5" cy="71.5" r="9.5" fill="none" stroke="#208818" stroke-width="5" stroke-dasharray="0.8 1.2"/><circle cx="26.5" cy="71.5" r="5" fill="#106818"/></svg>
<div class="t" style="left:61px;top:782px;font-size:14px;font-weight:bold;color:#fff;text-shadow:1px 0 #000,-1px 0 #000,0 1px #000,0 -1px #000,1px 1px #000,-1px -1px #000,1px -1px #000,-1px 1px #000">OD</div>
<div class="t" id="f17" style="left:26px;top:888px;font-size:12px;color:#000;transform:scaleX(0.9633)">14/11/2016</div>
<div class="a" style="left:98px;top:778px;width:75px;height:126px;border:1px solid #101010;box-shadow:inset 0 0 0 1px #fff;background:#00f0f8"></div>
<svg class="a" style="left:109px;top:782px" width="53" height="105"><defs><linearGradient id="tgOS" x1="0" y1="0" x2="0" y2="1"><stop offset="0" stop-color="#08103a"/><stop offset="0.2" stop-color="#08103a"/><stop offset="0.42" stop-color="#103878"/><stop offset="0.6" stop-color="#0a2060"/><stop offset="1" stop-color="#061850"/></linearGradient><radialGradient id="tfOS" cx="0.5" cy="0.45" r="0.55"><stop offset="0" stop-color="#c06838"/><stop offset="0.75" stop-color="#9a4a24"/><stop offset="1" stop-color="#502010"/></radialGradient><filter id="tblOS"><feGaussianBlur stdDeviation="0.8"/></filter></defs><rect width="53" height="52" fill="url(#tgOS)"/><g filter="url(#tblOS)"><path d="M0,8 Q14,6 26,7 T53,5 L53,15 Q40,18 26,17 T0,17 Z" fill="#30d020"/><path d="M0,13 Q14,12 26,14 T53,13 L53,16 Q40,18 26,17 T0,16 Z" fill="#10a040" opacity="0.7"/><path d="M0,15 Q14,15 26,16 T53,13 L53,16 Q40,18 26,18 T0,17 Z" fill="#f07010" opacity="0.85"/><path d="M0,17 Q14,17 26,18 T53,16 L53,24 Q30,27 0,26 Z" fill="#1890a0" opacity="0.7"/></g><rect y="52" width="53" height="53" fill="#000"/><circle cx="26.5" cy="71.5" r="19" fill="url(#tfOS)"/><circle cx="11" cy="68" r="3.5" fill="#f8c8a0" opacity="0.9"/><circle cx="26.5" cy="71.5" r="9.5" fill="none" stroke="#208818" stroke-width="5" stroke-dasharray="0.8 1.2"/><circle cx="26.5" cy="71.5" r="5" fill="#106818"/></svg>
<div class="t" style="left:141px;top:782px;font-size:14px;font-weight:bold;color:#fff;text-shadow:1px 0 #000,-1px 0 #000,0 1px #000,0 -1px #000,1px 1px #000,-1px -1px #000,1px -1px #000,-1px 1px #000">OS</div>
<div class="t" id="f18" style="left:106px;top:888px;font-size:12px;color:#000;transform:scaleX(0.9633)">14/11/2016</div>
<div class="a" style="left:111px;top:826px;width:49px;height:12px;border-radius:2px;background:linear-gradient(#888,#505050 50%,#383838 51%,#606060);border:1px solid #303030"></div>
<div class="t" id="f19" style="left:121px;top:828px;font-size:10px;font-weight:bold;color:#fff;transform:scaleX(1.0937)">OPEN</div>
<div class="btn hot" style="left:862px;top:771px;width:280px;height:19px"></div>
<div class="t" id="f20" style="left:970px;top:775px;font-size:12px;color:#000;transform:scaleX(0.9434)">Eye: OS(L)</div>
<div class="btn " style="left:862px;top:797px;width:280px;height:19px"></div>
<div class="t" id="f21" style="left:970px;top:801px;font-size:12px;color:#000;transform:scaleX(0.9258)">Scan: Radial</div>
<div class="btn sel" style="left:862px;top:823px;width:280px;height:19px"></div>
<div class="t" id="f22" style="left:958px;top:827px;font-size:12px;color:#000;transform:scaleX(0.9541)">Date: 14/11/2016</div>
<svg class="a" style="left:1155px;top:50px" width="760" height="475" viewBox="1155 50 760 475"><defs><clipPath id="fc"><circle cx="1531.5" cy="252" r="215"/></clipPath><linearGradient id="fg" gradientUnits="userSpaceOnUse" x1="1320" y1="0" x2="1750" y2="0"><stop offset="0" stop-color="#c46434"/><stop offset="1" stop-color="#884428"/></linearGradient><radialGradient id="fbr" gradientUnits="userSpaceOnUse" cx="1440" cy="290" r="95"><stop offset="0" stop-color="#e47c48" stop-opacity="0.6"/><stop offset="1" stop-color="#e47c48" stop-opacity="0"/></radialGradient><linearGradient id="ftop" gradientUnits="userSpaceOnUse" x1="0" y1="40" x2="0" y2="240"><stop offset="0" stop-color="#401808" stop-opacity="0.45"/><stop offset="1" stop-color="#401808" stop-opacity="0"/></linearGradient><radialGradient id="disc" gradientUnits="userSpaceOnUse" cx="1358" cy="238" r="34" gradientTransform="translate(1358 238) scale(1 1.2) translate(-1358 -238)"><stop offset="0" stop-color="#fde8c4"/><stop offset="0.55" stop-color="#f8d8a8"/><stop offset="0.85" stop-color="#f0b888"/><stop offset="1" stop-color="#e89868" stop-opacity="0"/></radialGradient><radialGradient id="ppa" gradientUnits="userSpaceOnUse" cx="1345" cy="240" r="75"><stop offset="0" stop-color="#f0a070" stop-opacity="0.9"/><stop offset="0.6" stop-color="#e08a58" stop-opacity="0.5"/><stop offset="1" stop-color="#d07040" stop-opacity="0"/></radialGradient><radialGradient id="mac" gradientUnits="userSpaceOnUse" cx="1533" cy="258" r="34"><stop offset="0" stop-color="#8a2810" stop-opacity="0.75"/><stop offset="0.5" stop-color="#9a3414" stop-opacity="0.35"/><stop offset="1" stop-color="#a03c18" stop-opacity="0"/></radialGradient><radialGradient id="glow" gradientUnits="userSpaceOnUse" cx="1440" cy="260" r="120"><stop offset="0" stop-color="#e08850" stop-opacity="0.45"/><stop offset="1" stop-color="#e08850" stop-opacity="0"/></radialGradient><clipPath id="fcl"><rect x="1155" y="50" width="760" height="404"/></clipPath><filter id="vb"><feGaussianBlur stdDeviation="0.6"/></filter></defs><g clip-path="url(#fc)"><rect x="1155" y="50" width="760" height="404" fill="url(#fg)"/><rect x="1155" y="50" width="760" height="404" fill="url(#ftop)"/><rect x="1155" y="50" width="760" height="404" fill="url(#fbr)"/><circle cx="1345" cy="240" r="75" fill="url(#ppa)"/><circle cx="1533" cy="258" r="34" fill="url(#mac)"/><ellipse cx="1358" cy="238" rx="34" ry="41" fill="url(#disc)"/><path d="M1339,201 C1341.7,198.3 1348.6,190.7 1355.0,185.0 C1361.4,179.3 1370.1,173.0 1377.6,167.0 C1385.1,161.0 1392.5,153.5 1400.0,149.0 C1407.5,144.5 1415.1,141.7 1422.6,140.0 C1430.1,138.3 1433.8,139.3 1445.0,139.0 C1456.2,138.7 1478.7,138.4 1490.0,138.0 C1501.3,137.6 1506.0,136.7 1512.7,136.7 C1519.4,136.7 1523.4,136.3 1530.0,138.0 C1536.6,139.7 1545.0,142.9 1552.5,147.0 C1560.0,151.1 1567.5,158.6 1575.0,162.7 C1582.5,166.8 1590.1,170.0 1597.6,171.7 C1605.1,173.4 1612.5,173.4 1620.0,173.0 C1627.5,172.6 1635.2,171.2 1642.7,169.5 C1650.2,167.8 1657.5,164.9 1665.0,162.7 C1672.5,160.4 1679.0,158.6 1688.0,156.0 C1697.0,153.4 1708.7,150.0 1719.0,147.0 C1729.3,144.0 1744.8,139.5 1750.0,138.0" stroke="#962a14" stroke-width="3.6" fill="none" stroke-linecap="round" opacity="0.8"/><path d="M1337,230 C1336.7,221.0 1332.5,189.3 1335.0,176.0 C1337.5,162.7 1346.0,157.2 1352.0,150.0 C1358.0,142.8 1366.0,140.3 1371.0,133.0 C1376.0,125.7 1374.2,114.6 1382.0,106.0 C1389.8,97.4 1405.7,88.6 1418.0,81.5 C1430.3,74.4 1445.5,68.8 1456.0,63.5 C1466.5,58.2 1475.3,53.2 1481.0,50.0 C1486.7,46.8 1488.5,45.0 1490.0,44.0" stroke="#9c3016" stroke-width="2.6" fill="none" stroke-linecap="round" opacity="0.8"/><path d="M1463,68 C1467.5,69.5 1480.6,72.5 1490.0,77.0 C1499.4,81.5 1511.2,92.8 1519.5,95.0 C1527.8,97.2 1534.5,92.4 1540.0,90.5 C1545.5,88.6 1547.4,87.2 1552.5,83.8 C1557.6,80.4 1566.5,75.9 1570.6,70.3 C1574.7,64.7 1575.9,53.4 1577.0,50.0" stroke="#a03418" stroke-width="1.8" fill="none" stroke-linecap="round" opacity="0.8"/><path d="M1519,97 C1516.8,100.0 1512.3,109.3 1506.0,115.0 C1499.7,120.7 1485.2,128.3 1481.0,131.0" stroke="#a43818" stroke-width="1.5" fill="none" stroke-linecap="round" opacity="0.8"/><path d="M1530,99.6 C1537.5,100.3 1560.0,102.1 1575.0,104.0 C1590.0,105.9 1605.0,108.7 1620.0,111.0 C1635.0,113.3 1651.5,116.9 1665.0,117.6 C1678.5,118.3 1695.0,115.4 1701.0,115.0" stroke="#a03418" stroke-width="2.0" fill="none" stroke-linecap="round" opacity="0.8"/><path d="M1570.6,79.3 C1578.8,78.9 1604.3,75.1 1620.0,77.0 C1635.7,78.9 1657.5,88.3 1665.0,90.6" stroke="#a43818" stroke-width="1.4" fill="none" stroke-linecap="round" opacity="0.8"/><path d="M1665,117.6 C1664.7,120.6 1661.5,130.1 1663.0,135.7 C1664.5,141.3 1672.2,148.8 1674.0,151.4" stroke="#a43818" stroke-width="1.3" fill="none" stroke-linecap="round" opacity="0.8"/><path d="M1346,232 C1351.3,230.2 1366.8,223.6 1377.6,221.0 C1388.4,218.4 1399.8,219.7 1411.0,216.7 C1422.2,213.7 1433.7,204.5 1445.0,203.0 C1456.3,201.5 1467.7,209.2 1479.0,207.7 C1490.3,206.2 1504.2,194.8 1512.7,194.0 C1521.2,193.2 1521.5,200.0 1530.0,203.0 C1538.5,206.0 1552.7,211.2 1564.0,212.0 C1575.3,212.8 1584.5,208.9 1597.6,207.8 C1610.7,206.7 1627.6,203.6 1642.7,205.5 C1657.8,207.4 1673.0,215.2 1688.0,219.0 C1703.0,222.8 1725.5,226.5 1733.0,228.0" stroke="#a43818" stroke-width="1.6" fill="none" stroke-linecap="round" opacity="0.8"/><path d="M1597.6,171.7 C1599.1,175.4 1602.9,185.8 1606.6,194.0 C1610.3,202.2 1617.0,213.1 1620.0,221.0 C1623.0,228.9 1623.9,238.2 1624.7,241.6" stroke="#a83c1c" stroke-width="1.3" fill="none" stroke-linecap="round" opacity="0.8"/><path d="M1649.5,171.7 C1655.9,175.4 1679.4,185.8 1688.0,194.0 C1696.6,202.2 1698.8,216.5 1701.0,221.0" stroke="#a83c1c" stroke-width="1.3" fill="none" stroke-linecap="round" opacity="0.8"/><path d="M1330,120 C1331.2,127.1 1335.5,148.0 1337.0,162.6 C1338.5,177.2 1337.8,191.5 1339.0,207.7 C1340.2,223.9 1343.6,250.0 1344.0,260.0 C1344.4,270.0 1341.9,266.2 1341.5,267.5" stroke="#c04424" stroke-width="3.0" fill="none" stroke-linecap="round" opacity="0.8"/><path d="M1341.5,267.5 C1341.9,270.5 1339.7,278.8 1343.8,285.5 C1347.9,292.2 1359.3,300.5 1366.0,308.0 C1372.7,315.5 1377.6,322.8 1384.0,330.6 C1390.4,338.4 1397.4,346.8 1404.6,355.0 C1411.8,363.2 1419.5,371.3 1427.0,380.0 C1434.5,388.7 1442.8,399.8 1449.6,407.0 C1456.4,414.2 1460.9,419.2 1467.6,423.0 C1474.3,426.8 1482.5,428.2 1490.0,429.7 C1497.5,431.2 1504.4,431.3 1512.7,432.0 C1521.0,432.7 1531.5,432.9 1540.0,434.0 C1548.5,435.1 1555.0,435.8 1563.8,438.9 C1572.6,442.0 1588.1,450.1 1593.0,452.4" stroke="#962a14" stroke-width="3.8" fill="none" stroke-linecap="round" opacity="0.8"/><path d="M1337,278.8 C1339.2,286.3 1346.3,312.9 1350.5,323.8 C1354.7,334.7 1359.0,336.9 1362.0,344.0 C1365.0,351.1 1364.9,360.6 1368.6,366.6 C1372.3,372.6 1378.0,375.5 1384.0,380.0 C1390.0,384.5 1398.2,388.7 1404.6,393.6 C1411.0,398.5 1415.9,404.9 1422.6,409.4 C1429.3,413.9 1437.5,418.1 1445.0,420.7 C1452.5,423.3 1460.1,422.0 1467.6,425.0 C1475.1,428.0 1479.6,438.7 1490.0,438.7 C1500.4,438.7 1512.1,428.0 1530.0,425.0 C1547.9,422.0 1579.2,423.0 1597.6,420.8 C1616.0,418.6 1627.3,414.1 1640.5,411.8 C1653.7,409.6 1670.5,408.1 1676.5,407.3" stroke="#9c3016" stroke-width="2.0" fill="none" stroke-linecap="round" opacity="0.8"/><path d="M1355,263 C1357.6,265.2 1363.3,272.9 1370.8,276.5 C1378.3,280.1 1392.1,282.5 1400.0,284.4 C1407.9,286.3 1412.0,285.4 1418.0,287.8 C1424.0,290.2 1429.7,296.6 1436.0,299.0 C1442.3,301.4 1450.0,302.8 1456.0,302.4 C1462.0,302.0 1464.0,299.8 1472.0,296.8 C1480.0,293.8 1498.4,286.5 1503.7,284.4" stroke="#a43818" stroke-width="1.6" fill="none" stroke-linecap="round" opacity="0.8"/><path d="M1436,299 C1433.0,305.0 1421.0,329.0 1418.0,335.0" stroke="#a83c1c" stroke-width="1.3" fill="none" stroke-linecap="round" opacity="0.8"/><path d="M1458.6,314.8 C1463.8,314.4 1479.1,314.9 1490.0,312.6 C1500.9,310.4 1518.3,303.2 1524.0,301.3" stroke="#a83c1c" stroke-width="1.3" fill="none" stroke-linecap="round" opacity="0.8"/><path d="M1535,346 C1531.3,350.2 1520.9,363.1 1512.7,371.0 C1504.5,378.9 1497.0,388.7 1485.7,393.6 C1474.4,398.5 1451.8,399.3 1445.0,400.4" stroke="#a43818" stroke-width="1.5" fill="none" stroke-linecap="round" opacity="0.8"/><path d="M1540,375.6 C1535.5,377.8 1518.8,382.3 1512.7,389.0 C1506.7,395.7 1506.7,408.1 1503.7,416.0 C1500.7,423.9 1496.2,433.0 1494.7,436.4" stroke="#a43818" stroke-width="1.4" fill="none" stroke-linecap="round" opacity="0.8"/><path d="M1530,355.5 C1533.8,351.4 1547.2,339.7 1552.5,330.7 C1557.8,321.7 1558.2,309.3 1561.6,301.4 C1565.0,293.5 1570.9,286.3 1572.8,283.3" stroke="#a43818" stroke-width="1.4" fill="none" stroke-linecap="round" opacity="0.8"/><path d="M1530,375.7 C1535.6,371.6 1551.4,361.5 1563.8,351.0 C1576.2,340.5 1593.9,321.6 1604.4,312.6 C1614.9,303.6 1620.6,301.3 1627.0,296.8 C1633.4,292.3 1640.1,287.5 1642.7,285.6" stroke="#a43818" stroke-width="1.5" fill="none" stroke-linecap="round" opacity="0.8"/><path d="M1530,416 C1537.5,411.5 1560.7,397.2 1575.0,389.0 C1589.3,380.8 1604.4,375.7 1615.7,366.7 C1627.0,357.7 1635.6,345.1 1642.7,335.0 C1649.8,324.9 1655.9,310.8 1658.5,306.0" stroke="#a03418" stroke-width="1.7" fill="none" stroke-linecap="round" opacity="0.8"/><path d="M1640.5,411.8 C1641.6,405.0 1642.1,381.9 1647.0,371.0 C1651.9,360.1 1661.0,353.5 1670.0,346.4 C1679.0,339.3 1691.3,330.6 1701.0,328.4 C1710.7,326.2 1723.5,332.2 1728.0,333.0" stroke="#a03418" stroke-width="1.6" fill="none" stroke-linecap="round" opacity="0.8"/><path d="M1701,328.4 C1701.8,323.9 1705.0,305.9 1705.8,301.4" stroke="#a83c1c" stroke-width="1.2" fill="none" stroke-linecap="round" opacity="0.8"/></g><circle cx="1531.5" cy="252" r="214.5" fill="none" stroke="#10182a" stroke-width="1.5" clip-path="url(#fcl)"/><path d="M1682,92 L1693,90 L1708,104 L1700,114 Z" fill="#a44a22"/><line x1="1620.6" y1="226.4" x2="1629.3" y2="224.1" stroke="#6cc83c" stroke-width="2"/><line x1="1611.5" y1="204.5" x2="1619.3" y2="200.0" stroke="#6cc83c" stroke-width="2"/><line x1="1597.0" y1="185.7" x2="1603.4" y2="179.3" stroke="#6cc83c" stroke-width="2"/><line x1="1578.2" y1="171.2" x2="1582.7" y2="163.4" stroke="#6cc83c" stroke-width="2"/><line x1="1556.3" y1="162.1" x2="1558.6" y2="153.4" stroke="#6cc83c" stroke-width="2"/><line x1="1532.7" y1="159.0" x2="1532.7" y2="150.0" stroke="#6cc83c" stroke-width="2"/><line x1="1509.1" y1="162.1" x2="1506.8" y2="153.4" stroke="#6cc83c" stroke-width="2"/><line x1="1487.2" y1="171.2" x2="1482.7" y2="163.4" stroke="#6cc83c" stroke-width="2"/><line x1="1468.4" y1="185.7" x2="1462.0" y2="179.3" stroke="#6cc83c" stroke-width="2"/><line x1="1453.9" y1="204.5" x2="1446.1" y2="200.0" stroke="#6cc83c" stroke-width="2"/><line x1="1444.8" y1="226.4" x2="1436.1" y2="224.1" stroke="#6cc83c" stroke-width="2"/><line x1="1444.8" y1="273.6" x2="1436.1" y2="275.9" stroke="#6cc83c" stroke-width="2"/><line x1="1453.9" y1="295.5" x2="1446.1" y2="300.0" stroke="#6cc83c" stroke-width="2"/><line x1="1468.4" y1="314.3" x2="1462.0" y2="320.7" stroke="#6cc83c" stroke-width="2"/><line x1="1487.2" y1="328.8" x2="1482.7" y2="336.6" stroke="#6cc83c" stroke-width="2"/><line x1="1509.1" y1="337.9" x2="1506.8" y2="346.6" stroke="#6cc83c" stroke-width="2"/><line x1="1532.7" y1="341.0" x2="1532.7" y2="350.0" stroke="#6cc83c" stroke-width="2"/><line x1="1556.3" y1="337.9" x2="1558.6" y2="346.6" stroke="#6cc83c" stroke-width="2"/><line x1="1578.2" y1="328.8" x2="1582.7" y2="336.6" stroke="#6cc83c" stroke-width="2"/><line x1="1597.0" y1="314.3" x2="1603.4" y2="320.7" stroke="#6cc83c" stroke-width="2"/><line x1="1611.5" y1="295.5" x2="1619.3" y2="300.0" stroke="#6cc83c" stroke-width="2"/><line x1="1620.6" y1="273.6" x2="1629.3" y2="275.9" stroke="#6cc83c" stroke-width="2"/><line x1="1433.5" y1="250" x2="1616" y2="250" stroke="#6cc83c" stroke-width="2.2"/><path d="M1612,245 L1632,250 L1612,255 Z" fill="#6cc83c"/><text x="1413.7" y="258.0" text-anchor="middle" font-family="Liberation Sans" font-size="21" fill="#6cc83c">1</text><text x="1417.8" y="227.2" text-anchor="middle" font-family="Liberation Sans" font-size="21" fill="#6cc83c">2</text><text x="1429.6" y="198.5" text-anchor="middle" font-family="Liberation Sans" font-size="21" fill="#6cc83c">3</text><text x="1448.6" y="173.9" text-anchor="middle" font-family="Liberation Sans" font-size="21" fill="#6cc83c">4</text><text x="1473.2" y="154.9" text-anchor="middle" font-family="Liberation Sans" font-size="21" fill="#6cc83c">5</text><text x="1501.9" y="143.1" text-anchor="middle" font-family="Liberation Sans" font-size="21" fill="#6cc83c">6</text><text x="1532.7" y="139.0" text-anchor="middle" font-family="Liberation Sans" font-size="21" fill="#6cc83c">7</text><text x="1563.5" y="143.1" text-anchor="middle" font-family="Liberation Sans" font-size="21" fill="#6cc83c">8</text><text x="1592.2" y="154.9" text-anchor="middle" font-family="Liberation Sans" font-size="21" fill="#6cc83c">9</text><text x="1616.8" y="173.9" text-anchor="middle" font-family="Liberation Sans" font-size="21" fill="#6cc83c">10</text><text x="1635.8" y="198.5" text-anchor="middle" font-family="Liberation Sans" font-size="21" fill="#6cc83c">11</text><text x="1647.6" y="227.2" text-anchor="middle" font-family="Liberation Sans" font-size="21" fill="#6cc83c">12</text></svg><div class="ob" style="left:1162px;top:55px;width:92px;height:23px"></div><div class="ob" style="left:1162px;top:79px;width:92px;height:23px"></div><svg class="a" style="left:1460px;top:455px" width="150" height="70"><defs><radialGradient id="tc" cx="0.5" cy="0.5" r="0.5"><stop offset="0" stop-color="#0020e0"/><stop offset="0.1" stop-color="#00a0ff"/><stop offset="0.2" stop-color="#a0f040"/><stop offset="0.45" stop-color="#c0f020"/><stop offset="0.8" stop-color="#40f050"/><stop offset="1" stop-color="#20e890"/></radialGradient></defs><circle cx="41.7" cy="34.4" r="28.5" fill="url(#tc)"/><g fill="none" stroke="#e0e0e0" stroke-width="1"><circle cx="105.7" cy="34.4" r="28.8"/><circle cx="105.7" cy="34.4" r="14"/><circle cx="105.7" cy="34.4" r="5"/><line x1="85.3" y1="14" x2="126.1" y2="54.8"/><line x1="126.1" y1="14" x2="85.3" y2="54.8"/></g></svg>
<div class="a" style="left:1162px;top:582px;width:92px;height:23px;background:#008000;border:1px solid #50c850"></div><svg class="a" style="left:1155px;top:578px" width="760" height="326" viewBox="1155 578 760 326"><defs><radialGradient id="sg" gradientUnits="userSpaceOnUse" cx="1545" cy="738" r="175" gradientTransform="translate(1545 738) scale(1 0.78) translate(-1545 -738)"><stop offset="0" stop-color="#b8c818"/><stop offset="0.22" stop-color="#a8c418"/><stop offset="0.45" stop-color="#70c418"/><stop offset="0.72" stop-color="#28c820"/><stop offset="1" stop-color="#18c838"/></radialGradient><linearGradient id="sr" gradientUnits="userSpaceOnUse" x1="1416" y1="0" x2="1707" y2="0"><stop offset="0" stop-color="#30c040" stop-opacity="0"/><stop offset="0.55" stop-color="#20c080" stop-opacity="0"/><stop offset="0.85" stop-color="#10c8a0" stop-opacity="0.6"/><stop offset="1" stop-color="#18c8c0" stop-opacity="0.9"/></linearGradient><linearGradient id="sb" gradientUnits="userSpaceOnUse" x1="0" y1="646" x2="0" y2="855"><stop offset="0" stop-color="#20c020" stop-opacity="0.25"/><stop offset="0.3" stop-color="#20c020" stop-opacity="0"/><stop offset="0.75" stop-color="#20c860" stop-opacity="0"/><stop offset="1" stop-color="#20c8a0" stop-opacity="0.6"/></linearGradient><radialGradient id="halo" gradientUnits="userSpaceOnUse" cx="1556" cy="738" r="34" gradientTransform="translate(1556 738) scale(1 0.7) translate(-1556 -738)"><stop offset="0" stop-color="#30e8f0"/><stop offset="0.4" stop-color="#40e0a0"/><stop offset="0.75" stop-color="#40d840" stop-opacity="0.7"/><stop offset="1" stop-color="#40d840" stop-opacity="0"/></radialGradient><radialGradient id="pit" gradientUnits="userSpaceOnUse" cx="1557" cy="749" r="16" gradientTransform="translate(1557 749) scale(1 0.6) translate(-1557 -749)"><stop offset="0" stop-color="#0010d0"/><stop offset="0.55" stop-color="#0040f0"/><stop offset="0.85" stop-color="#10a0f8"/><stop offset="1" stop-color="#20d0f0" stop-opacity="0"/></radialGradient><linearGradient id="lg" x1="0" y1="0" x2="0" y2="1"><stop offset="0" stop-color="#ffffff"/><stop offset="0.1" stop-color="#ffb0b0"/><stop offset="0.25" stop-color="#ff1010"/><stop offset="0.32" stop-color="#ff9000"/><stop offset="0.37" stop-color="#f0f000"/><stop offset="0.47" stop-color="#00f000"/><stop offset="0.6" stop-color="#00f0ff"/><stop offset="0.7" stop-color="#0020ff"/><stop offset="0.8" stop-color="#8080d0"/><stop offset="0.87" stop-color="#a0a0a0"/><stop offset="1" stop-color="#202020"/></linearGradient><filter id="tsb" x="-50%" y="-50%" width="200%" height="200%"><feGaussianBlur stdDeviation="2.5"/></filter><radialGradient id="bmg" gradientUnits="userSpaceOnUse" cx="1561" cy="756" r="52"><stop offset="0" stop-color="#fff"/><stop offset="0.55" stop-color="#fff"/><stop offset="1" stop-color="#000"/></radialGradient><mask id="bm" maskUnits="userSpaceOnUse" x="1500" y="690" width="120" height="90"><rect x="1500" y="690" width="120" height="90" fill="url(#bmg)"/></mask><filter id="tsb2" x="-20%" y="-20%" width="140%" height="140%"><feGaussianBlur stdDeviation="1.2"/></filter><linearGradient id="bowl" gradientUnits="userSpaceOnUse" x1="0" y1="712" x2="0" y2="759"><stop offset="0" stop-color="#60e020" stop-opacity="0"/><stop offset="0.3" stop-color="#40e030" stop-opacity="0.9"/><stop offset="0.55" stop-color="#30e0e0"/><stop offset="0.78" stop-color="#1848ff"/><stop offset="1" stop-color="#1010c8"/></linearGradient><clipPath id="ec"><ellipse cx="1561.5" cy="750.5" rx="145.5" ry="104"/></clipPath></defs><ellipse cx="1561.5" cy="750.5" rx="145.5" ry="104" fill="url(#sg)"/><ellipse cx="1561.5" cy="750.5" rx="145.5" ry="104" fill="url(#sr)"/><ellipse cx="1561.5" cy="750.5" rx="145.5" ry="104" fill="url(#sb)"/><g clip-path="url(#ec)"><ellipse cx="1563.2" cy="754.4" rx="3.7" ry="2.7" fill="none" stroke="#002000" stroke-opacity="0.15" stroke-width="0.8"/><ellipse cx="1563.3" cy="754.3" rx="7.4" ry="5.3" fill="none" stroke="#002000" stroke-opacity="0.22" stroke-width="0.8"/><ellipse cx="1561.8" cy="754.2" rx="11.1" ry="8.0" fill="none" stroke="#002000" stroke-opacity="0.12" stroke-width="0.8"/><ellipse cx="1560.0" cy="754.1" rx="14.8" ry="10.6" fill="none" stroke="#002000" stroke-opacity="0.18" stroke-width="0.8"/><ellipse cx="1559.6" cy="754.0" rx="18.5" ry="13.3" fill="none" stroke="#002000" stroke-opacity="0.08" stroke-width="0.8"/><ellipse cx="1560.9" cy="753.9" rx="22.2" ry="15.9" fill="none" stroke="#002000" stroke-opacity="0.15" stroke-width="0.8"/><ellipse cx="1562.8" cy="753.8" rx="25.9" ry="18.6" fill="none" stroke="#002000" stroke-opacity="0.22" stroke-width="0.8"/><ellipse cx="1563.5" cy="753.7" rx="29.6" ry="21.2" fill="none" stroke="#002000" stroke-opacity="0.12" stroke-width="0.8"/><ellipse cx="1562.3" cy="753.6" rx="33.3" ry="23.9" fill="none" stroke="#002000" stroke-opacity="0.18" stroke-width="0.8"/><ellipse cx="1560.4" cy="753.5" rx="37.0" ry="26.5" fill="none" stroke="#002000" stroke-opacity="0.08" stroke-width="0.8"/><ellipse cx="1559.5" cy="753.4" rx="40.7" ry="29.2" fill="none" stroke="#002000" stroke-opacity="0.15" stroke-width="0.8"/><ellipse cx="1560.4" cy="753.3" rx="44.4" ry="31.8" fill="none" stroke="#002000" stroke-opacity="0.22" stroke-width="0.8"/><ellipse cx="1562.3" cy="753.2" rx="48.1" ry="34.5" fill="none" stroke="#002000" stroke-opacity="0.12" stroke-width="0.8"/><ellipse cx="1563.5" cy="753.1" rx="51.8" ry="37.1" fill="none" stroke="#002000" stroke-opacity="0.18" stroke-width="0.8"/><ellipse cx="1562.8" cy="753.0" rx="55.5" ry="39.8" fill="none" stroke="#002000" stroke-opacity="0.08" stroke-width="0.8"/><ellipse cx="1560.9" cy="752.9" rx="59.2" ry="42.4" fill="none" stroke="#002000" stroke-opacity="0.15" stroke-width="0.8"/><ellipse cx="1559.6" cy="752.8" rx="62.9" ry="45.1" fill="none" stroke="#002000" stroke-opacity="0.22" stroke-width="0.8"/><ellipse cx="1560.0" cy="752.7" rx="66.6" ry="47.7" fill="none" stroke="#002000" stroke-opacity="0.12" stroke-width="0.8"/><ellipse cx="1561.8" cy="752.6" rx="70.3" ry="50.4" fill="none" stroke="#002000" stroke-opacity="0.18" stroke-width="0.8"/><ellipse cx="1563.3" cy="752.5" rx="74.0" ry="53.0" fill="none" stroke="#002000" stroke-opacity="0.08" stroke-width="0.8"/><ellipse cx="1563.2" cy="752.4" rx="77.6" ry="55.7" fill="none" stroke="#002000" stroke-opacity="0.15" stroke-width="0.8"/><ellipse cx="1561.5" cy="752.3" rx="81.3" ry="58.3" fill="none" stroke="#002000" stroke-opacity="0.22" stroke-width="0.8"/><ellipse cx="1559.8" cy="752.2" rx="85.0" ry="61.0" fill="none" stroke="#002000" stroke-opacity="0.12" stroke-width="0.8"/><ellipse cx="1559.7" cy="752.1" rx="88.7" ry="63.6" fill="none" stroke="#002000" stroke-opacity="0.18" stroke-width="0.8"/><ellipse cx="1561.2" cy="752.0" rx="92.4" ry="66.3" fill="none" stroke="#002000" stroke-opacity="0.08" stroke-width="0.8"/><ellipse cx="1563.0" cy="751.9" rx="96.1" ry="69.0" fill="none" stroke="#002000" stroke-opacity="0.15" stroke-width="0.8"/><ellipse cx="1563.4" cy="751.8" rx="99.8" ry="71.6" fill="none" stroke="#002000" stroke-opacity="0.22" stroke-width="0.8"/><ellipse cx="1562.0" cy="751.7" rx="103.5" ry="74.3" fill="none" stroke="#002000" stroke-opacity="0.12" stroke-width="0.8"/><ellipse cx="1560.2" cy="751.6" rx="107.2" ry="76.9" fill="none" stroke="#002000" stroke-opacity="0.18" stroke-width="0.8"/><ellipse cx="1559.5" cy="751.5" rx="110.9" ry="79.6" fill="none" stroke="#002000" stroke-opacity="0.08" stroke-width="0.8"/><ellipse cx="1560.7" cy="751.4" rx="114.6" ry="82.2" fill="none" stroke="#002000" stroke-opacity="0.15" stroke-width="0.8"/><ellipse cx="1562.6" cy="751.3" rx="118.3" ry="84.9" fill="none" stroke="#002000" stroke-opacity="0.22" stroke-width="0.8"/><ellipse cx="1563.5" cy="751.2" rx="122.0" ry="87.5" fill="none" stroke="#002000" stroke-opacity="0.12" stroke-width="0.8"/><ellipse cx="1562.6" cy="751.1" rx="125.7" ry="90.2" fill="none" stroke="#002000" stroke-opacity="0.18" stroke-width="0.8"/><ellipse cx="1560.6" cy="751.0" rx="129.4" ry="92.8" fill="none" stroke="#002000" stroke-opacity="0.08" stroke-width="0.8"/><ellipse cx="1559.5" cy="750.9" rx="133.1" ry="95.5" fill="none" stroke="#002000" stroke-opacity="0.15" stroke-width="0.8"/><ellipse cx="1560.2" cy="750.8" rx="136.8" ry="98.1" fill="none" stroke="#002000" stroke-opacity="0.22" stroke-width="0.8"/><ellipse cx="1562.1" cy="750.7" rx="140.5" ry="100.8" fill="none" stroke="#002000" stroke-opacity="0.12" stroke-width="0.8"/><ellipse cx="1563.4" cy="750.6" rx="144.2" ry="103.4" fill="none" stroke="#002000" stroke-opacity="0.18" stroke-width="0.8"/></g><ellipse cx="1561" cy="746" rx="40" ry="16" fill="#183000" opacity="0.55" filter="url(#tsb)"/><g mask="url(#bm)"><ellipse cx="1561" cy="735" rx="37" ry="24" fill="url(#bowl)" filter="url(#tsb2)"/></g><path d="M1371,719 L1401,719 L1397,741 L1367,741 Z" fill="#c0c0c0"/><path d="M1722,719 L1752,719 L1756,741 L1726,741 Z" fill="#c0c0c0"/><text x="1384" y="735" text-anchor="middle" font-family="Liberation Serif" font-weight="bold" font-size="13" fill="#303030">N</text><text x="1739" y="735" text-anchor="middle" font-family="Liberation Serif" font-weight="bold" font-size="13" fill="#303030">T</text><rect x="1170" y="804" width="25" height="81" fill="url(#lg)"/></svg><div class="t" style="left:1199px;top:798.0px;font-size:15px;font-style:italic;color:#f0f0f0">500</div><div class="t" style="left:1199px;top:814.8px;font-size:15px;font-style:italic;color:#f0f0f0">400</div><div class="t" style="left:1199px;top:831.6px;font-size:15px;font-style:italic;color:#f0f0f0">300</div><div class="t" style="left:1199px;top:848.4px;font-size:15px;font-style:italic;color:#f0f0f0">200</div><div class="t" style="left:1199px;top:865.2px;font-size:15px;font-style:italic;color:#f0f0f0">100</div><div class="t" style="left:1199px;top:882.0px;font-size:15px;font-style:italic;color:#f0f0f0">0</div><div class="btn hot" style="left:1161px;top:907px;width:74px;height:21px"></div><div class="btn sel" style="left:1238px;top:907px;width:74px;height:21px"></div><div class="t" style="left:1181px;top:912px;font-size:12px;color:#000">Graph</div><div class="t" style="left:1262px;top:912px;font-size:12px;color:#000">Map</div><div class="btn sel" style="left:1161px;top:528px;width:84px;height:21px"></div><div class="a" style="left:1164px;top:531px;width:78px;height:15px;border:1px dotted #000"></div><div class="btn" style="left:1249px;top:528px;width:84px;height:21px"></div><div class="btn" style="left:1337px;top:528px;width:84px;height:21px"></div><div class="a" style="left:1425px;top:532px;width:12px;height:13px;border:1px solid #8f8f8f;background:linear-gradient(135deg,#dcdcdc,#fff)"></div><div class="btn" style="left:1839px;top:528px;width:73px;height:21px"></div><div class="t" style="left:1167px;top:533px;font-size:12px;color:#000">Color Fundus</div><div class="t" style="left:1264px;top:533px;font-size:12px;color:#000">IR Fundus</div><div class="t" style="left:1356px;top:533px;font-size:12px;color:#000">Red-free</div><div class="t" style="left:1855px;top:533px;font-size:12px;color:#000">Analyze</div>
<div class="t" id="f23" style="left:1169px;top:61px;font-size:13px;color:#f0f0f0;transform:scaleX(1.0715)">Overlay</div>
<div class="t" id="f24" style="left:1169px;top:85px;font-size:13px;color:#f0f0f0;transform:scaleX(1.0382)">Grid</div>
<div class="t" id="f25" style="left:1168px;top:589px;font-size:13px;color:#f0f0f0;transform:scaleX(1.0488)">Surface</div>
</body></html>
